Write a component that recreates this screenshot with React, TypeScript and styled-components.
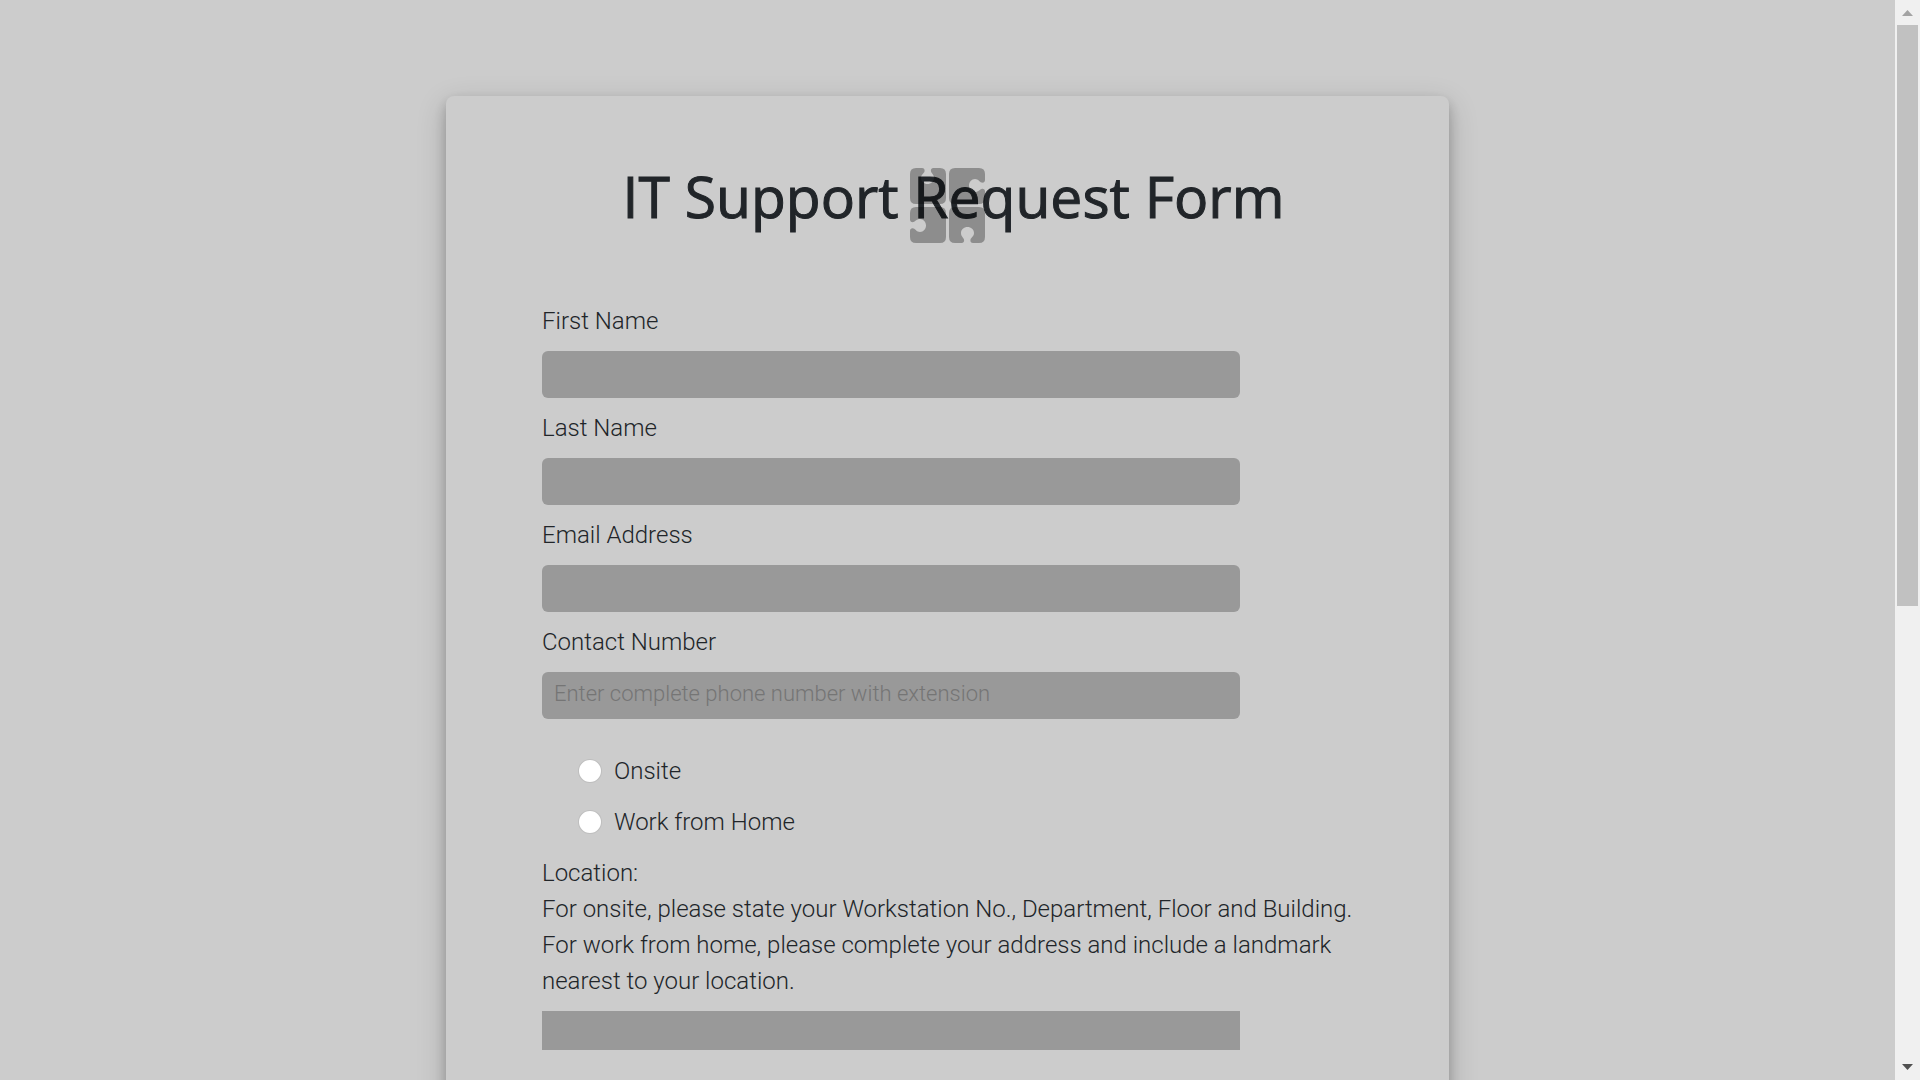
import React from "react";
import styled, { createGlobalStyle } from "styled-components";

const GlobalStyle = createGlobalStyle`
  *, *::before, *::after { box-sizing: border-box; }
  body {
    margin: 0;
    background: #ccc;
    color: #212529;
    font-family: Roboto, "Liberation Sans", sans-serif;
    font-size: 24px;
    font-weight: 300;
    line-height: 36px;
  }
`;

const Window = styled.div`
  display: flex;
  height: 100vh;
  overflow: hidden;
`;

const Page = styled.main`
  position: relative;
  flex: 1;
  min-width: 0;
  padding: 96px 24px;
`;

const Card = styled.form`
  max-width: 1003px;
  margin: 0 auto;
  padding: 60px 84px 96px 96px;
  border-radius: 8px;
  background: #ccc;
  box-shadow: 0 6px 12px rgba(0, 0, 0, 0.2), 0 9px 30px rgba(0, 0, 0, 0.19);
`;

const Title = styled.h1`
  margin: 0 0 66px;
  font-family: "Open Sans", "Noto Sans", sans-serif;
  font-size: 57px;
  font-weight: 500;
  line-height: 81px;
  text-align: center;
  -webkit-text-stroke: 1px #212529;
`;

const Field = styled.div`
  display: flex;
  flex-direction: column;
  gap: 12px;
  margin-bottom: 12px;
`;

const TextInput = styled.input`
  width: 100%;
  max-width: 698px;
  height: 47px;
  padding: 0 12px 4px;
  border: 0;
  border-radius: 6px;
  background: #999;
  color: #212529;
  font: inherit;
  font-size: 22px;
  &::placeholder { color: #757575; opacity: 1; }
`;

const TextArea = styled.textarea`
  display: block;
  width: 100%;
  max-width: 698px;
  height: 39px;
  padding: 0 12px;
  border: 0;
  border-radius: 0;
  background: #999;
  color: #212529;
  font: inherit;
  resize: none;
  overflow: hidden;
`;

const Choices = styled.div`
  display: flex;
  flex-direction: column;
  gap: 15px;
  padding: 22px 0 15px 36px;
`;

const Choice = styled.label`
  display: flex;
  align-items: center;
  gap: 12px;
`;

const Radio = styled.input`
  appearance: none;
  width: 24px;
  height: 24px;
  margin: 0;
  border: 1px solid rgba(0, 0, 0, 0.25);
  border-radius: 50%;
  background: #fff;
  background-clip: border-box;
  &:checked { border: 7px solid #0d6efd; }
`;

const Loader = styled.svg`
  position: absolute;
  top: 168px;
  left: calc(50% - 38px);
  width: 75px;
  height: 75px;
  opacity: 0.3;
  pointer-events: none;
`;

const ScrollBar = styled.div`
  display: flex;
  flex-direction: column;
  width: 25px;
  background: #f0f0f0;
`;

const Arrow = styled.svg`
  display: block;
  width: 25px;
  height: 25px;
`;

const Track = styled.div`
  flex: 1;
  padding: 0 2px;
`;

const Thumb = styled.div`
  height: 56.4%;
  background: #c1c1c1;
`;

const fields = [
  { id: "first-name", label: "First Name", type: "text" },
  { id: "last-name", label: "Last Name", type: "text" },
  { id: "email", label: "Email Address", type: "email" },
  {
    id: "contact",
    label: "Contact Number",
    type: "tel",
    placeholder: "Enter complete phone number with extension",
  },
];

const piece =
  "M6 0H12C14 0 15 1.500 14.500 3.500C14 5.500 11 6.500 11 10C11 13.500 14 16 17.500 16C21 16 24 13.500 24 10C24 6.500 21.500 5.500 21 3.500C20.500 1.500 21.500 0 23.500 0H30Q36 0 36 6V30Q36 36 30 36H6Q0 36 0 30V6Q0 0 6 0Z";

export default function App() {
  return (
    <>
      <GlobalStyle />
      <Window>
        <Page>
          <Card>
            <Title>IT Support Request Form</Title>
            {fields.map((f) => (
              <Field key={f.id}>
                <label htmlFor={f.id}>{f.label}</label>
                <TextInput id={f.id} name={f.id} type={f.type} placeholder={f.placeholder} />
              </Field>
            ))}
            <Choices role="radiogroup" aria-label="Work setup">
              <Choice>
                <Radio type="radio" name="setup" value="onsite" />
                Onsite
              </Choice>
              <Choice>
                <Radio type="radio" name="setup" value="home" />
                Work from Home
              </Choice>
            </Choices>
            <Field>
              <label htmlFor="location">
                Location:
                <br />
                For onsite, please state your Workstation No., Department, Floor and Building.
                <br />
                For work from home, please complete your address and include a landmark nearest to
                your location.
              </label>
              <TextArea id="location" name="location" />
            </Field>
          </Card>
          <Loader viewBox="0 0 75 75" aria-hidden="true">
            {[0, 90, 180, 270].map((angle) => (
              <path key={angle} d={piece} transform={`rotate(${angle} 37.5 37.5)`} />
            ))}
          </Loader>
        </Page>
        <ScrollBar aria-hidden="true">
          <Arrow viewBox="0 0 25 25">
            <path d="M7 16L12.500 10L18 16Z" fill="#a3a3a3" />
          </Arrow>
          <Track>
            <Thumb />
          </Track>
          <Arrow viewBox="0 0 25 25">
            <path d="M7 9L12.500 15L18 9Z" fill="#505050" />
          </Arrow>
        </ScrollBar>
      </Window>
    </>
  );
}
